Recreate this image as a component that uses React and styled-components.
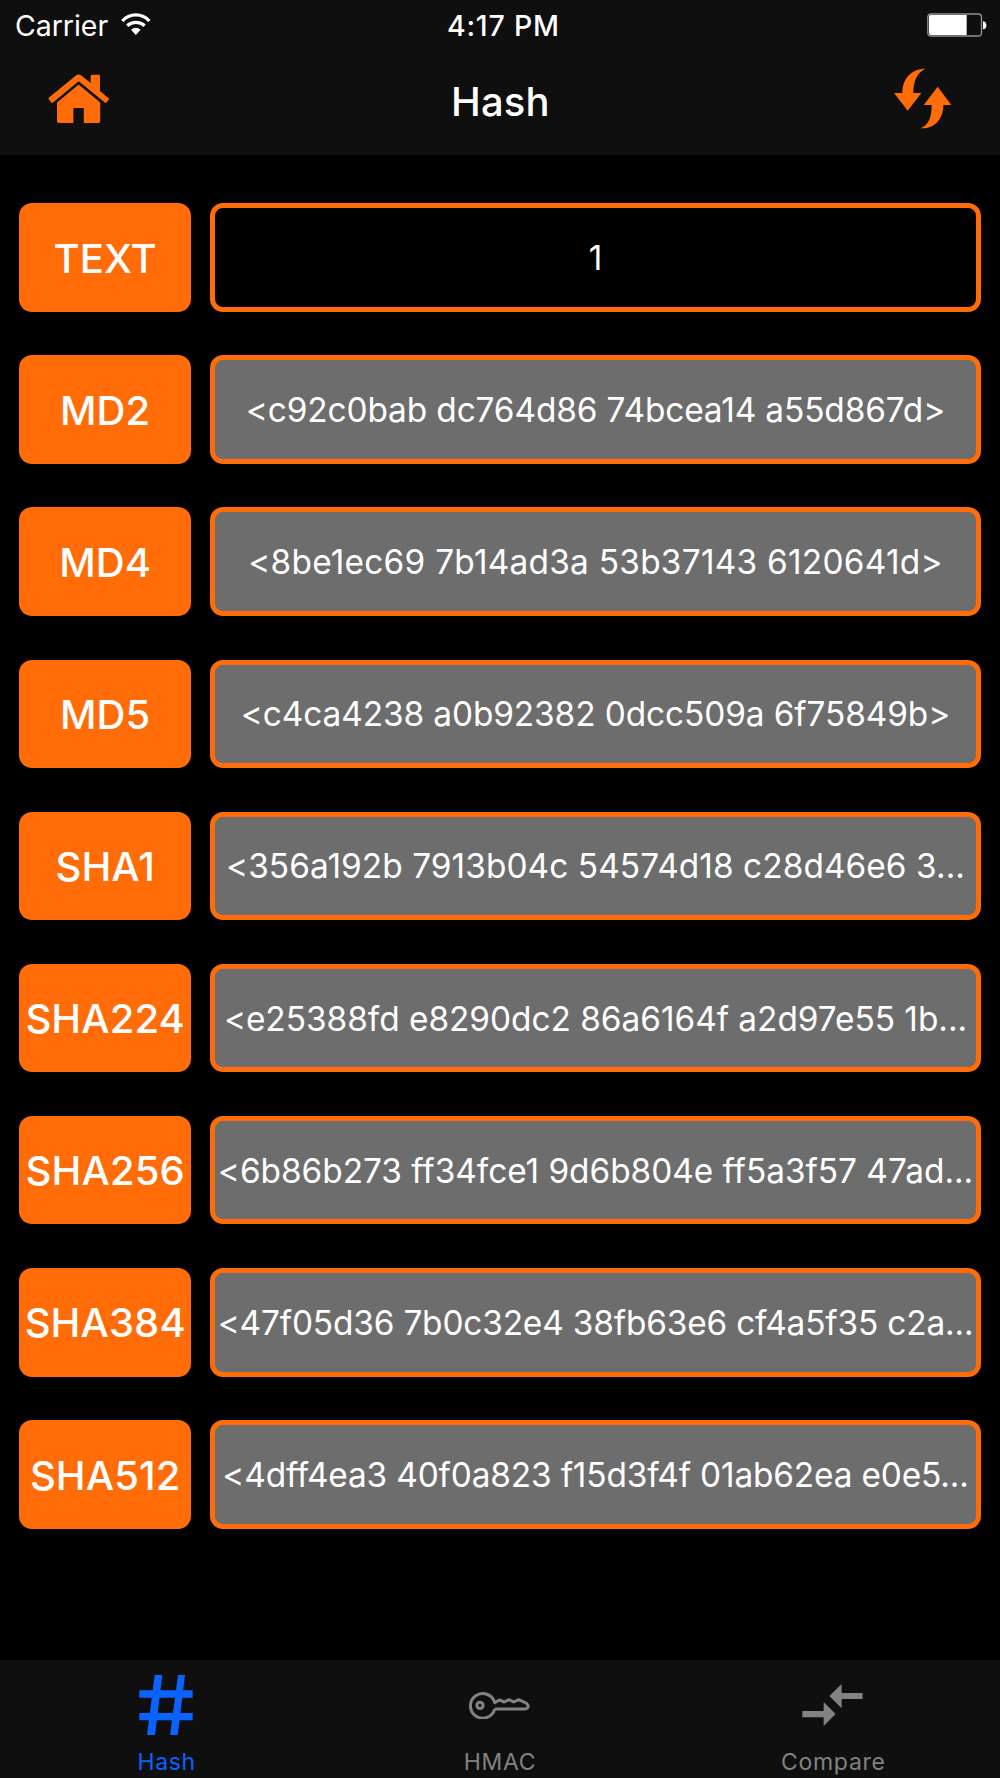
import { useState } from 'react'
import styled, { createGlobalStyle } from 'styled-components'

const GlobalStyle = createGlobalStyle`
  body {
    margin: 0;
    background: #000000;
  }
`

const Screen = styled.div`
  display: flex;
  flex-direction: column;
  width: 1000px;
  height: 1778px;
  overflow: hidden;
  background: #000000;
  color: #ffffff;
  font-family: Inter, 'Liberation Sans', sans-serif;
`

const Header = styled.header`
  flex: none;
  height: 154.7px;
  background: #0f0f0f;
`

const StatusBar = styled.div`
  display: grid;
  grid-template-columns: 1fr auto 1fr;
  align-items: center;
  height: 50px;
  padding: 0 13.3px 0 15px;
  box-sizing: border-box;
`

const Carrier = styled.div`
  display: flex;
  align-items: center;
  gap: 12.5px;
  font-size: 28.5px;
  letter-spacing: -0.05px;
`

const WifiSvg = styled.svg`
  margin-bottom: 2px;
`

const Time = styled.div`
  font-size: 28.5px;
  font-weight: 500;
  letter-spacing: 0.8px;
  margin: 1px 0 0 5px;
`

const Battery = styled.svg`
  justify-self: end;
`

const NavBar = styled.div`
  display: flex;
  align-items: center;
  justify-content: space-between;
  height: 98px;
  padding: 0 48.5px 0 48px;
`

const NavButton = styled.button`
  display: flex;
  border: none;
  padding: 0;
  background: none;
  color: #ff6c08;
  cursor: pointer;
`

const Title = styled.div`
  font-size: 40px;
  font-weight: 500;
  letter-spacing: 0.2px;
  margin: 5px 3px 0 0;
`

const List = styled.main`
  flex: 1;
  display: flex;
  flex-direction: column;
  gap: 43.5px;
  padding: 48.6px 19.2px 0 19.4px;
`

const Row = styled.div`
  display: flex;
  gap: 19.2px;
  height: 108.6px;
`

const Label = styled.div`
  display: flex;
  flex: none;
  align-items: center;
  justify-content: center;
  width: 171.6px;
  box-sizing: border-box;
  padding-top: 1.4px;
  border-radius: 13px;
  background: #ff6c08;
  font-size: 40px;
  font-weight: 500;
  letter-spacing: 0.1px;
`

const Field = styled.div`
  display: flex;
  flex: 1;
  min-width: 0;
  align-items: center;
  justify-content: center;
  box-sizing: border-box;
  padding-top: 1px;
  border: 5px solid #ff6c08;
  border-radius: 13px;
  background: ${props => props.$editable ? '#000000' : '#6d6d6d'};
  font-size: 33.4px;
  letter-spacing: ${props => props.$spacing || 0}px;
  white-space: nowrap;
`

const TabBar = styled.nav`
  display: flex;
  flex: none;
  height: 118.3px;
  background: #0f0f0f;
`

const Tab = styled.button`
  display: flex;
  flex: 1;
  flex-direction: column;
  align-items: center;
  border: none;
  padding: 0;
  background: none;
  color: ${props => props.$active ? '#0b63ff' : '#828282'};
  font-family: inherit;
  font-size: 23px;
  letter-spacing: 0.7px;
  cursor: pointer;
`

const TabIcon = styled.div`
  display: flex;
  align-items: center;
  height: 90.6px;
  margin-right: 1px;
`

const TabLabel = styled.div`
  line-height: 24px;
`

const WifiIcon = () => (
  <WifiSvg width="30" height="22.3" viewBox="0 0 90 67" fill="none" stroke="currentColor" strokeWidth="10">
    <path d="M4 24A54 54 0 0 1 85 24" />
    <path d="M18.5 38A39.4 39.4 0 0 1 71 38" />
    <path d="M30 50Q44.5 38 59 50L44.5 66z" fill="currentColor" stroke="none" />
  </WifiSvg>
)

const BatteryIcon = () => (
  <Battery width="60" height="24" viewBox="0 0 180 72">
    <rect x="2.5" y="3" width="161" height="66" rx="10" fill="none" stroke="#929292" strokeWidth="4" />
    <path d="M12 6H119V66H12Q6 66 6 60V12Q6 6 12 6z" fill="#ffffff" />
    <path d="M168 25C181 25 182 49 168 49z" fill="#ffffff" />
  </Battery>
)

const HomeIcon = () => (
  <svg width="62" height="50" viewBox="0 0 62 50" fill="currentColor">
    <path d="M1 23.4L28.3 1.2Q30.7 -.3 33 1.2L42.7 9V2Q42.7.7 44 .7H50.7Q52 .7 52 2V17L60.6 24.2Q61.4 25 60.7 25.8L58.5 28.4Q57.7 29.2 56.8 28.5L30.7 7.2 5 28.5Q4.1 29.2 3.3 28.4L.9 25.6Q.1 24.4 1 23.4z" />
    <path d="M30.7 10.6L52.2 28.4V47Q52.2 49 50.2 49H35.8V34H25.4V49H11Q9 49 9 47V28.4z" />
  </svg>
)

const RefreshIcon = () => (
  <svg width="57.7" height="61.3" viewBox="0 0 173 184" fill="currentColor">
    <path d="M94 2C53 2 25 31 25 75H0L41 128 82 75H58C58 41 68 14 94 2z" />
    <path d="M131 56L172 111H148C148 151 123 184 79 181 103 171 113 151 113 111H89z" />
  </svg>
)

const HashIcon = () => (
  <svg width="54" height="60.7" viewBox="0 0 162 182" fill="currentColor">
    <path d="M47 0H70L48 182H24zM117 0H138L116 182H93zM1 46H161V68H1zM1 114H161V136H1z" />
  </svg>
)

const KeyIcon = () => (
  <svg width="60.7" height="28.7" viewBox="0 0 182 86" fill="none" stroke="currentColor" strokeWidth="9" strokeLinejoin="round">
    <path d="M77 54A37 37 0 1 1 77 35L91 27 106 33 120 26 134 33 149 26 172 36Q180 43 176 50 174 54 168 54H77" />
    <circle cx="33" cy="43" r="9.5" />
  </svg>
)

const CompareIcon = () => (
  <svg width="61.3" height="42.7" viewBox="0 0 184 128" fill="currentColor">
    <path d="M82 36L119 0V27H182V45H119V73z" />
    <path d="M101 90L65 54V81H1V100H65V126z" />
  </svg>
)

const hashes = [
  { name: 'MD2', value: '<c92c0bab dc764d86 74bcea14 a55d867d>', spacing: -0.12 },
  { name: 'MD4', value: '<8be1ec69 7b14ad3a 53b37143 6120641d>', spacing: 0.25 },
  { name: 'MD5', value: '<c4ca4238 a0b92382 0dcc509a 6f75849b>', spacing: -0.1 },
  { name: 'SHA1', value: '<356a192b 7913b04c 54574d18 c28d46e6 3...', spacing: 0.06 },
  { name: 'SHA224', value: '<e25388fd e8290dc2 86a6164f a2d97e55 1b...', spacing: -0.03 },
  { name: 'SHA256', value: '<6b86b273 ff34fce1 9d6b804e ff5a3f57 47ad...', spacing: -0.03 },
  { name: 'SHA384', value: '<47f05d36 7b0c32e4 38fb63e6 cf4a5f35 c2a...', spacing: -0.17 },
  { name: 'SHA512', value: '<4dff4ea3 40f0a823 f15d3f4f 01ab62ea e0e5...', spacing: -0.16 }
]

const tabs = [
  { name: 'Hash', Icon: HashIcon },
  { name: 'HMAC', Icon: KeyIcon },
  { name: 'Compare', Icon: CompareIcon }
]

const App = () => {
  const [activeTab, setActiveTab] = useState('Hash')

  return (
    <>
      <GlobalStyle />
      <Screen>
        <Header>
          <StatusBar>
            <Carrier>Carrier<WifiIcon /></Carrier>
            <Time>4:17 PM</Time>
            <BatteryIcon />
          </StatusBar>
          <NavBar>
            <NavButton aria-label="Home"><HomeIcon /></NavButton>
            <Title>Hash</Title>
            <NavButton aria-label="Refresh"><RefreshIcon /></NavButton>
          </NavBar>
        </Header>

        <List>
          <Row>
            <Label>TEXT</Label>
            <Field $editable>1</Field>
          </Row>
          {hashes.map(({ name, value, spacing }) => (
            <Row key={name}>
              <Label>{name}</Label>
              <Field $spacing={spacing}>{value}</Field>
            </Row>
          ))}
        </List>

        <TabBar>
          {tabs.map(({ name, Icon }) => (
            <Tab key={name} $active={activeTab === name} onClick={() => setActiveTab(name)}>
              <TabIcon><Icon /></TabIcon>
              <TabLabel>{name}</TabLabel>
            </Tab>
          ))}
        </TabBar>
      </Screen>
    </>
  )
}

export default App
